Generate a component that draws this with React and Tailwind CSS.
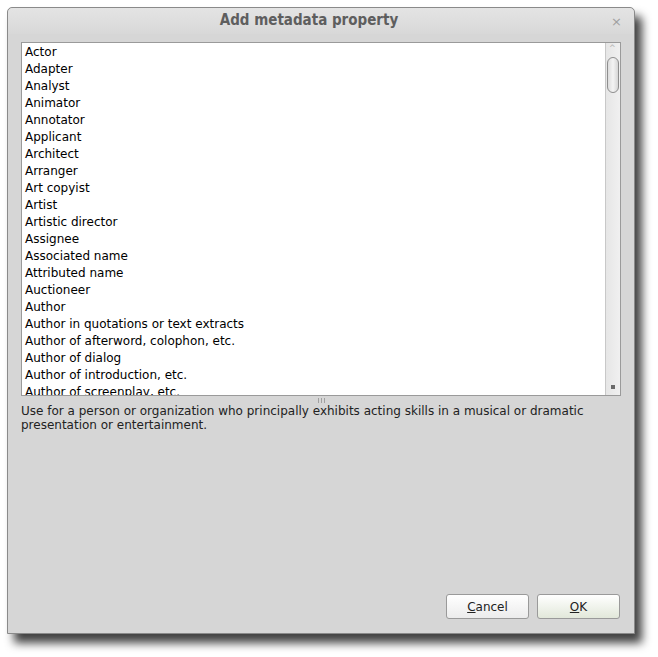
import React from "react";

const items = [
  "Actor","Adapter","Analyst","Animator","Annotator","Applicant","Architect","Arranger","Art copyist","Artist","Artistic director","Assignee","Associated name","Attributed name","Auctioneer","Author","Author in quotations or text extracts","Author of afterword, colophon, etc.","Author of dialog","Author of introduction, etc.","Author of screenplay, etc.",
];

export default function App() {
  return (
    <div className="w-[658px] h-[657px] bg-white relative overflow-hidden" style={{ fontFamily: '"DejaVu Sans", sans-serif' }}>
      <div className="absolute left-[7px] top-[7px] w-[628px] h-[627px] bg-[#d6d6d6] border border-[#8a8a8a] rounded-t-[5px] shadow-[7px_9px_10px_rgba(0,0,0,0.75)] flex flex-col">
        <div className="h-[26px] flex items-center justify-center relative bg-gradient-to-b from-[#e4e4e4] to-[#d8d8d8] rounded-t-[5px] pr-[24px]">
          <span className="text-[15px] font-bold text-[#5e5e5e] mt-[-1px]" style={{ fontFamily: '"DejaVu Sans Condensed", "DejaVu Sans", sans-serif' }}>Add metadata property</span>
          <span className="absolute right-[12px] top-[4px] text-[13px] text-[#a0a0a0]">×</span>
        </div>
        <div className="flex flex-col px-[13px] pt-[8px]">
          <div className="flex h-[354px] border border-[#9a9a9a] bg-white">
            <div className="flex-1 overflow-hidden pl-[3px] pt-[1px] text-[12px] leading-[17px] text-black">
              {items.map((t) => (
                <div key={t} className="h-[17px] whitespace-nowrap">{t}</div>
              ))}
            </div>
            <div className="w-[15px] border-l border-[#c8c8c8] bg-gradient-to-r from-[#e6e6e6] to-[#f0f0f0] relative">
              <div className="absolute left-[3px] top-[2px] text-[8px] text-[#b5b5b5] leading-none">^</div>
              <div className="absolute left-[1px] top-[14px] w-[12px] h-[36px] rounded-full border border-[#8e8e8e] bg-gradient-to-r from-[#dcdcdc] via-[#f4f4f4] to-[#d6d6d6]"></div>
              <div className="absolute left-[5px] bottom-[6px] w-[4px] h-[4px] bg-[#6a6a6a]"></div>
            </div>
          </div>
          <div className="h-[8px] flex items-center justify-center gap-[2px]">
            <div className="w-[1px] h-[5px] bg-[#a0a0a0]"></div>
            <div className="w-[1px] h-[5px] bg-[#a0a0a0]"></div>
            <div className="w-[1px] h-[5px] bg-[#a0a0a0]"></div>
          </div>
          <div className="text-[12px] leading-[14px] text-[#222]">
            Use for a person or organization who principally exhibits acting skills in a musical or dramatic presentation or entertainment.
          </div>
        </div>
        <div className="flex-1"></div>
        <div className="flex justify-end gap-[8px] pr-[14px] pb-[14px]">
          <button className="w-[83px] h-[25px] rounded-[3px] border border-[#9a9a9a] bg-gradient-to-b from-[#ffffff] to-[#ececec] text-[12px] text-[#222]">
            <span className="underline">C</span>ancel
          </button>
          <button className="w-[83px] h-[25px] rounded-[3px] border border-[#9a9a9a] bg-gradient-to-b from-[#ffffff] to-[#e2e8da] text-[12px] text-[#222]">
            <span className="underline">O</span>K
          </button>
        </div>
      </div>
    </div>
  );
}
